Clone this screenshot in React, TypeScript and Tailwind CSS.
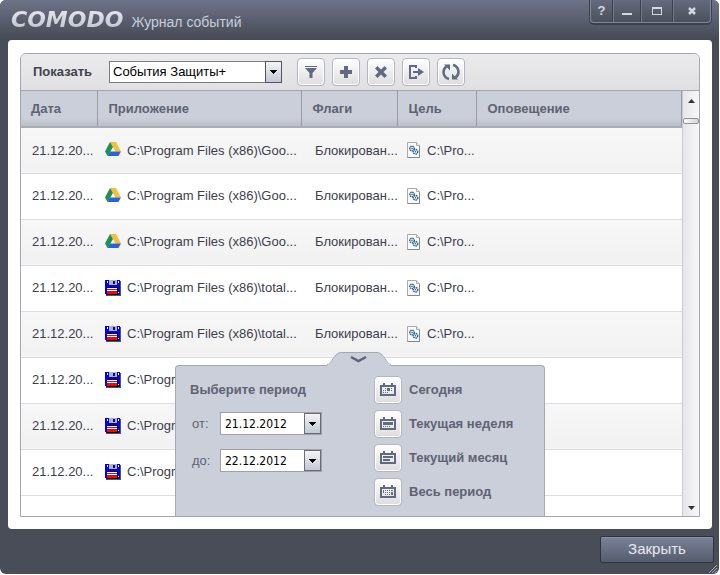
import { useState } from "react";
import type { ReactNode } from "react";
import { clsx } from "clsx";

type EventRow = {
  date: string;
  icon: "drive" | "floppy";
  app: string;
  flag?: string;
  target?: string;
};

const drive: EventRow = {
  date: "21.12.20...",
  icon: "drive",
  app: "C:\\Program Files (x86)\\Goo...",
  flag: "Блокирован...",
  target: "C:\\Pro...",
};

const total: EventRow = {
  ...drive,
  icon: "floppy",
  app: "C:\\Program Files (x86)\\total...",
};

// rows that run under the period panel
const covered: EventRow = { date: "21.12.20...", icon: "floppy", app: "C:\\Progr" };

const events: EventRow[] = [drive, drive, drive, total, total, covered, covered, covered];

const columns = ["Дата", "Приложение", "Флаги", "Цель", "Оповещение"];

function DriveIcon() {
  return (
    <svg width="16" height="16" viewBox="0 0 16 16" className="shrink-0">
      <path d="M5 0h6l5 9.500h-5.500z" fill="#f5bf36" />
      <path d="M5 0 0 9.500 2.600 14 8 5z" fill="#1c9150" />
      <path d="M5 9.500h11L13.400 14H2.600z" fill="#2a61e0" />
    </svg>
  );
}

function FloppyIcon() {
  return (
    <svg width="16" height="16" viewBox="0 0 16 16" shapeRendering="crispEdges" className="shrink-0">
      <path d="M1 1h15v15H1z" fill="#555" />
      <path d="M0 0h14l1 1v14H1l-1-1z" fill="#0000f0" />
      <path d="M4 0h8v5H4z" fill="#b4b4b4" />
      <path d="M8 1h2v3H8z" fill="#0000d0" />
      <path d="M2 1h1v2H2zM13 1h1v2h-1z" fill="#fff" />
      <path d="M2 7h11v8H2z" fill="#000" />
      <path d="M2 8h10v6H2z" fill="#f00" />
      <path d="M2 8h10v1H2zM2 10h10v1H2zM13 12h1v1h-1z" fill="#fff" />
    </svg>
  );
}

function LibraryIcon() {
  return (
    <svg width="13" height="16" viewBox="0 0 13 16" className="shrink-0">
      <path d="M.5.5h9l3 3v12H.5z" fill="#fbfbfb" stroke="#a9aaad" />
      <path d="M.5 15.500h12V4" fill="none" stroke="#858689" />
      <path d="M9.500.5v3h3" fill="#eee" stroke="#a9aaad" />
      <circle cx="5" cy="6.500" r="2.300" fill="#dcebf5" stroke="#2f6690" strokeWidth="1.400" strokeDasharray="1.400 .6" />
      <circle cx="8.500" cy="9.800" r="2.300" fill="#dcebf5" stroke="#2f6690" strokeWidth="1.400" strokeDasharray="1.400 .6" />
      <path d="M4.500 6h1v1h-1zM8 9.300h1v1H8z" fill="#173d5c" />
    </svg>
  );
}

function CalendarIcon({ children }: { children: ReactNode }) {
  return (
    <svg width="16" height="14" viewBox="0 0 16 14" shapeRendering="crispEdges" fill="#626a7f">
      <path d="M0 2h16v11H0zM2 4v7h12V4z" fillRule="evenodd" />
      <path d="M3 0h2v3H3zM11 0h2v3h-2z" />
      {children}
    </svg>
  );
}

const periods = [
  {
    label: "Сегодня",
    mark: <path d="M7 5h3v3H7zM5 5h1v1H5zM11 5h1v1h-1zM3 7h1v1H3zM5 7h1v1H5zM11 7h1v1h-1zM3 9h1v1H3zM5 9h1v1H5zM7 9h1v1H7z" />,
  },
  {
    label: "Текущая неделя",
    mark: <path d="M3 5h10v3H3zM3 9h1v1H3zM5 9h1v1H5zM7 9h1v1H7zM9 9h1v1H9z" />,
  },
  { label: "Текущий месяц", mark: <path d="M3 5h10v2H3zM3 8h7v2H3z" /> },
  {
    label: "Весь период",
    mark: <path d="M3 5h1v2H3zM5 5h1v1H5zM7 5h1v1H7zM9 5h1v1H9zM11 5h2v1h-2zM3 7h1v1H3zM5 7h1v1H5zM7 7h1v1H7zM9 7h1v1H9zM11 7h2v3h-2zM5 9h1v1H5zM7 9h1v1H7zM9 9h1v1H9z" />,
  },
];

const tools = [
  {
    label: "Фильтр",
    icon: <path d="M3 3h12v1H3zM3 5h12l-4.500 5v5h-3v-5z" />,
  },
  { label: "Добавить", icon: <path d="M7 3h4v4h4v4h-4v4H7v-4H3V7h4z" /> },
  {
    label: "Удалить",
    icon: <path d="M3 5.500 5.500 3 9 6.500 12.500 3 15 5.500 11.500 9 15 12.500 12.500 15 9 11.500 5.500 15 3 12.500 6.500 9z" />,
  },
  {
    label: "Экспорт",
    icon: <path d="M2 2h8v3H8V4H4v10h4v-1h2v3H2zM6 8h5V5l6 4-6 4v-3H6z" />,
  },
  {
    label: "Обновить",
    icon: (
      <>
        <path d="M7 16A7 7 0 0 1 4.500 3.500M11 2a7 7 0 0 1 2.500 12.500" fill="none" stroke="#626a7f" strokeWidth="2.500" />
        <path d="M2 1.500h6v6zM16 16.500h-6v-6z" />
      </>
    ),
  },
];

function IconButton({ label, children }: { label?: string; children: ReactNode }) {
  return (
    <button
      aria-label={label}
      className="flex size-7 shrink-0 items-center justify-center rounded border border-[#b3b6c3] bg-linear-to-b from-white to-[#dddde0] shadow-[inset_0_0_0_1px_#ffffff]"
    >
      {children}
    </button>
  );
}

function DropArrow() {
  return (
    <svg width="7" height="4" viewBox="0 0 7 4" shapeRendering="crispEdges">
      <path d="M0 0h7L3.500 4z" />
    </svg>
  );
}

function DateField({ id, label, value }: { id: string; label: string; value: string }) {
  return (
    <div className="flex items-center">
      <label htmlFor={id} className="w-7 text-[13px]">
        {label}
      </label>
      <div className="flex h-[23px] w-[102px] border border-[#9ea1ad] bg-white">
        <input
          id={id}
          defaultValue={value}
          className="w-0 flex-1 pl-1 font-['DejaVu_Sans_Condensed','DejaVu_Sans',sans-serif] text-xs text-black outline-none"
        />
        <button
          aria-label="Открыть календарь"
          className="flex w-[17px] items-center justify-center border border-[#6b6d75] bg-linear-to-b from-[#f4f4f4] to-[#c4c8d6]"
        >
          <DropArrow />
        </button>
      </div>
    </div>
  );
}

function PeriodPanel() {
  return (
    <div className="absolute bottom-0 left-1/2 w-[370px] -translate-x-1/2 text-[#5f6272]">
      <button aria-label="Свернуть" className="relative z-10 -mb-px ml-[152px] block">
        <svg width="64" height="14" viewBox="0 0 64 14">
          <path d="M0 13.500C5 13.500 6 1 14 .5H50C58 1 59 13.500 64 13.500V14H0z" fill="#cacfda" />
          <path d="M0 12.500C5 12.500 6 1 14 .5H50C58 1 59 12.500 64 12.500" fill="none" stroke="#a5a8b0" />
          <path d="m24 5 7.500 4L39 5" fill="none" stroke="#5d6478" strokeWidth="2.500" />
        </svg>
      </button>
      <div className="flex h-[151px] rounded-t border border-b-0 border-[#a5a8b0] bg-[#cacfda] pl-3.5">
        <div className="w-[184px] pt-4">
          <h2 className="text-[13px] leading-4 font-bold">Выберите период</h2>
          <div className="flex flex-col gap-3.5 pt-3.5 pl-0.5">
            <DateField id="from" label="от:" value="21.12.2012" />
            <DateField id="to" label="до:" value="22.12.2012" />
          </div>
        </div>
        <div className="flex flex-col gap-1.5 pt-2.5">
          {periods.map((period) => (
            <label key={period.label} className="flex items-center gap-[7px] text-[13px] font-bold">
              <IconButton>
                <CalendarIcon>{period.mark}</CalendarIcon>
              </IconButton>
              {period.label}
            </label>
          ))}
        </div>
      </div>
    </div>
  );
}

function WindowControls() {
  return (
    <div className="mr-2 flex h-[23px] rounded-b border border-t-0 border-[#7f8699] bg-linear-to-b from-[#646b7d] to-[#4c505c] text-[#d3d7e3] shadow-[0_1px_0_1px_#3d414c]">
      <button aria-label="Справка" className="w-[22px] border-r border-[#3d414c] text-[13px] leading-5 font-bold">
        ?
      </button>
      <button aria-label="Свернуть окно" className="flex w-7 items-center justify-center border-r border-l border-r-[#3d414c] border-l-[#737a8c]">
        <svg width="10" height="10" fill="currentColor">
          <path d="M0 7h10v2H0z" />
        </svg>
      </button>
      <button aria-label="Развернуть" className="flex w-8 items-center justify-center border-r border-l border-r-[#3d414c] border-l-[#737a8c]">
        <svg width="10" height="8" fill="currentColor">
          <path d="M0 0h10v8H0zM1 2v5h8V2z" fillRule="evenodd" />
        </svg>
      </button>
      <button aria-label="Закрыть окно" className="flex w-[37px] items-center justify-center border-l border-l-[#737a8c]">
        <svg width="8" height="8" stroke="currentColor" strokeWidth="2.500">
          <path d="m1 1 6 6M7 1 1 7" />
        </svg>
      </button>
    </div>
  );
}

function Scrollbar() {
  return (
    <div className="flex w-[17px] flex-col items-center border-l border-[#c9cad2] bg-linear-to-r from-[#e6e6e9] to-[#f8f8f8]">
      <button aria-label="Вверх" className="flex h-[27px] items-center pb-2">
        <svg width="7" height="4" fill="#333">
          <path d="M3.500 0 7 4H0z" />
        </svg>
      </button>
      <div className="h-1.5 w-full rounded-xs border border-[#8f9096] bg-linear-to-r from-white to-[#d4d4d8]" />
      <button aria-label="Вниз" className="mt-auto flex h-4 items-center">
        <svg width="7" height="4" fill="#333">
          <path d="M0 0h7L3.500 4z" />
        </svg>
      </button>
    </div>
  );
}

function EventTable() {
  return (
    <table className="w-full table-fixed border-collapse text-[13px] text-[#3c3f4b]">
      <colgroup>
        <col className="w-[76px]" />
        <col className="w-[204px]" />
        <col className="w-24" />
        <col className="w-[79px]" />
        <col />
      </colgroup>
      <thead>
        <tr className="h-9 bg-linear-to-b from-[#cacfda] from-75% to-[#b9bcc7] text-left text-[#5f6272]">
          {columns.map((name, i) => (
            <th
              key={name}
              className={clsx(
                "border-r border-b-2 border-r-[#999ca8] border-b-[#aaadb6] p-0 font-bold",
                i === 0 ? "pl-2.5" : "pl-[11px]"
              )}
            >
              {name}
            </th>
          ))}
        </tr>
      </thead>
      <tbody>
        {events.map((event, i) => (
          <tr
            key={i}
            className={clsx(
              "h-[46px] border-b border-[#dcdcdf] whitespace-nowrap",
              i % 2 === 0 ? "bg-linear-to-b from-[#f7f7f8] to-[#f2f2f3]" : "bg-white"
            )}
          >
            <td className="p-0 pl-[11px]">{event.date}</td>
            <td className="p-0 pl-2">
              <div className="flex items-center gap-1.5">
                {event.icon === "drive" ? <DriveIcon /> : <FloppyIcon />}
                {event.app}
              </div>
            </td>
            <td className="p-0 pl-3.5">{event.flag}</td>
            <td className="p-0 pl-2.5">
              {event.target && (
                <div className="flex items-center gap-[7px]">
                  <LibraryIcon />
                  {event.target}
                </div>
              )}
            </td>
            <td />
          </tr>
        ))}
      </tbody>
    </table>
  );
}

export default function App() {
  const [source, setSource] = useState("defense");

  return (
    <div className="min-h-screen bg-white pr-px pb-px font-['Liberation_Sans',Arial,sans-serif]">
      <div className="flex min-h-[calc(100vh-1px)] flex-col rounded-md bg-[#494d58]">
        <header className="flex h-10 items-start justify-between rounded-t-md bg-linear-to-b from-[#6d7489] to-[#464a54] pl-[11px]">
          <div className="flex items-baseline gap-2 pt-1">
            <span className="bg-linear-to-b from-[#f0f2f7] to-[#b4b8c5] bg-clip-text font-['DejaVu_Sans',sans-serif] text-[22px] leading-8 font-bold text-transparent italic">
              COMODO
            </span>
            <h1 className="text-sm text-[#c9cedb]">Журнал событий</h1>
          </div>
          <WindowControls />
        </header>

        <main className="mx-2 mr-[7px] flex flex-1 flex-col rounded bg-white px-3 pt-[13px] pb-3">
          <section className="flex flex-1 flex-col rounded-t-md border border-[#a4a6af]">
            <div className="flex h-[37px] items-center rounded-t-md border-b border-[#a4a6af] bg-linear-to-b from-[#ebebed] to-[#e0e0e4] pl-3">
              <label htmlFor="source" className="w-[76px] text-[13px] font-bold text-[#3f424f]">
                Показать
              </label>
              <div className="relative mr-[15px] w-[173px]">
                <select
                  id="source"
                  value={source}
                  onChange={(e) => setSource(e.target.value)}
                  className="block h-[22px] w-full appearance-none border border-[#7b7d86] bg-white pl-[3px] text-[13px] text-black"
                >
                  <option value="defense">События Защиты+</option>
                </select>
                <span className="pointer-events-none absolute inset-y-0 right-0 flex w-[17px] items-center justify-center border border-[#55575f] bg-linear-to-b from-[#f4f4f4] to-[#c4c8d6]">
                  <DropArrow />
                </span>
              </div>
              <div className="flex gap-[7px]">
                {tools.map((tool) => (
                  <IconButton key={tool.label} label={tool.label}>
                    <svg width="18" height="18" viewBox="0 0 18 18" fill="#626a7f">
                      {tool.icon}
                    </svg>
                  </IconButton>
                ))}
              </div>
            </div>
            <div className="relative flex flex-1 overflow-hidden">
              <div className="flex-1">
                <EventTable />
              </div>
              <Scrollbar />
              <PeriodPanel />
            </div>
          </section>
        </main>

        <footer className="flex h-[45px] shrink-0 items-start justify-end pt-[7px] pr-px">
          <button className="h-[27px] w-[114px] rounded-xs border border-[#30333c] bg-linear-to-b from-[#7b8296] to-[#565c6e] text-[15px] text-[#e6e9f1] shadow-[inset_0_1px_0_#8b92a5]">
            Закрыть
          </button>
          <svg width="10" height="10" viewBox="0 0 10 10" stroke="#a4a9b8" className="-ml-1.5 self-end">
            <path d="m1 9 8-8M4 9l5-5M7 9l2-2" />
          </svg>
        </footer>
      </div>
    </div>
  );
}
